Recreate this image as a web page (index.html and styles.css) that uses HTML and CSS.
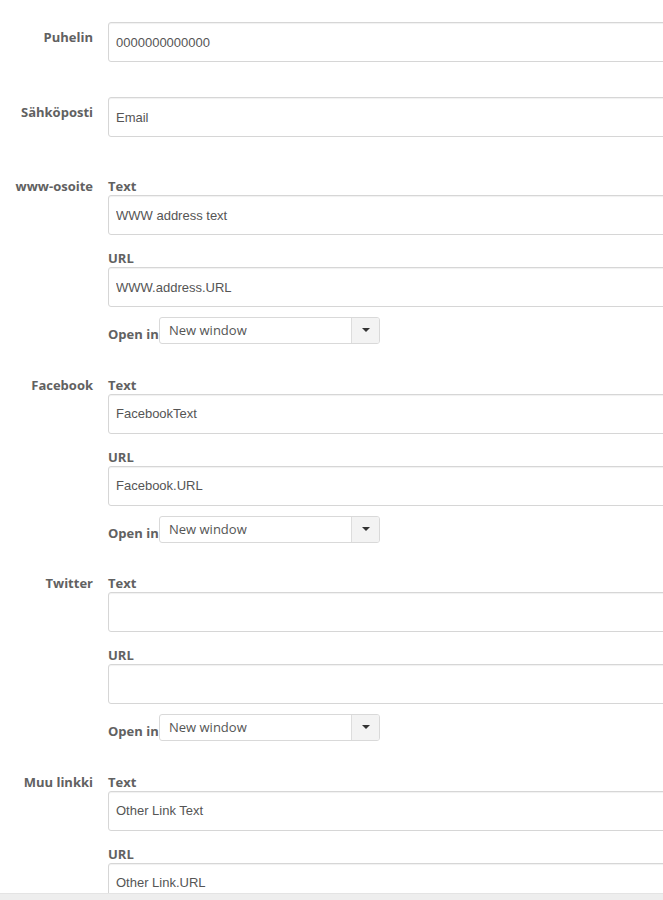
FILE: index.html
```html
<!DOCTYPE html>
<html>
<head>
    <title>Yhteystiedot</title>
    <link rel="stylesheet" href="styles.css">
</head>
<body>
    <form class="contact-form">
        <div class="row simple">
            <label class="row-label">Puhelin</label>
            <div class="fields">
                <input type="text" class="text-input" value="0000000000000">
            </div>
        </div>

        <div class="row simple">
            <label class="row-label">Sähköposti</label>
            <div class="fields">
                <input type="text" class="text-input" value="Email">
            </div>
        </div>

        <div class="row group">
            <label class="row-label">www-osoite</label>
            <div class="fields">
                <label class="field-label">Text</label>
                <input type="text" class="text-input" value="WWW address text">
                <label class="field-label url">URL</label>
                <input type="text" class="text-input" value="WWW.address.URL">
                <div class="open-in">
                    <span class="open-label">Open in</span>
                    <div class="select">
                        <span class="select-value">New window</span>
                        <span class="select-arrow"><span class="caret"></span></span>
                    </div>
                </div>
            </div>
        </div>

        <div class="row group">
            <label class="row-label">Facebook</label>
            <div class="fields">
                <label class="field-label">Text</label>
                <input type="text" class="text-input" value="FacebookText">
                <label class="field-label url">URL</label>
                <input type="text" class="text-input" value="Facebook.URL">
                <div class="open-in">
                    <span class="open-label">Open in</span>
                    <div class="select">
                        <span class="select-value">New window</span>
                        <span class="select-arrow"><span class="caret"></span></span>
                    </div>
                </div>
            </div>
        </div>

        <div class="row group">
            <label class="row-label">Twitter</label>
            <div class="fields">
                <label class="field-label">Text</label>
                <input type="text" class="text-input" value="">
                <label class="field-label url">URL</label>
                <input type="text" class="text-input" value="">
                <div class="open-in">
                    <span class="open-label">Open in</span>
                    <div class="select">
                        <span class="select-value">New window</span>
                        <span class="select-arrow"><span class="caret"></span></span>
                    </div>
                </div>
            </div>
        </div>

        <div class="row group">
            <label class="row-label">Muu linkki</label>
            <div class="fields">
                <label class="field-label">Text</label>
                <input type="text" class="text-input" value="Other Link Text">
                <label class="field-label url">URL</label>
                <input type="text" class="text-input" value="Other Link.URL">
            </div>
        </div>
    </form>
    <div class="bottom-bar"></div>
</body>
</html>
```

FILE: styles.css
```css
body {
    margin: 0;
    padding: 0;
    background: #fff;
    overflow: hidden;
    font-family: 'Open Sans', sans-serif;
    color: #616161;
}
.contact-form {
    padding-top: 22px;
    overflow: hidden;
}
.row {
    display: flex;
    align-items: flex-start;
}
.row.simple + .row.simple {
    margin-top: 35px;
}
.row.simple + .row.group {
    margin-top: 41px;
}
.row.group + .row.group {
    margin-top: 32.6px;
}
.row-label {
    flex: none;
    width: 93px;
    margin-right: 15px;
    text-align: right;
    font-size: 13px;
    font-weight: bold;
    line-height: 16px;
}
.row.simple .row-label {
    padding-top: 7px;
}
.fields {
    flex: none;
    width: 620px;
    display: flex;
    flex-direction: column;
}
.field-label {
    display: block;
    font-size: 13px;
    font-weight: bold;
    line-height: 16px;
    margin-bottom: 1px;
}
.field-label.url {
    margin-top: 15px;
}
.text-input {
    box-sizing: border-box;
    width: 100%;
    height: 40px;
    margin: 0;
    padding: 0 7px;
    border: 1px solid #d6d6d6;
    border-radius: 3px;
    box-shadow: inset 0 1px 1px rgba(0, 0, 0, 0.06);
    font-family: 'Liberation Sans', Arial, sans-serif;
    font-size: 13px;
    color: #555;
    background: #fff;
    outline: none;
}
.open-in {
    display: flex;
    align-items: flex-start;
    margin-top: 10px;
}
.open-label {
    font-size: 13px;
    font-weight: bold;
    line-height: 16px;
    padding-top: 9px;
    width: 51px;
}
.select {
    box-sizing: border-box;
    display: flex;
    width: 221px;
    height: 27px;
    border: 1px solid #d9d9d9;
    border-radius: 3px;
    background: #fff;
    overflow: hidden;
}
.select-value {
    flex: 1;
    padding-left: 9px;
    font-size: 13px;
    line-height: 24px;
    color: #555;
}
.select-arrow {
    flex: none;
    width: 27px;
    border-left: 1px solid #ddd;
    background: #f3f3f3;
    display: flex;
    align-items: center;
    justify-content: center;
}
.caret {
    width: 0;
    height: 0;
    border-left: 4px solid transparent;
    border-right: 4px solid transparent;
    border-top: 4px solid #333;
    margin-top: -1px;
}
.bottom-bar {
    position: fixed;
    left: 0;
    right: 0;
    bottom: 0;
    height: 6px;
    background: #eeeeee;
    border-top: 1px solid #e4e4e4;
}
```
